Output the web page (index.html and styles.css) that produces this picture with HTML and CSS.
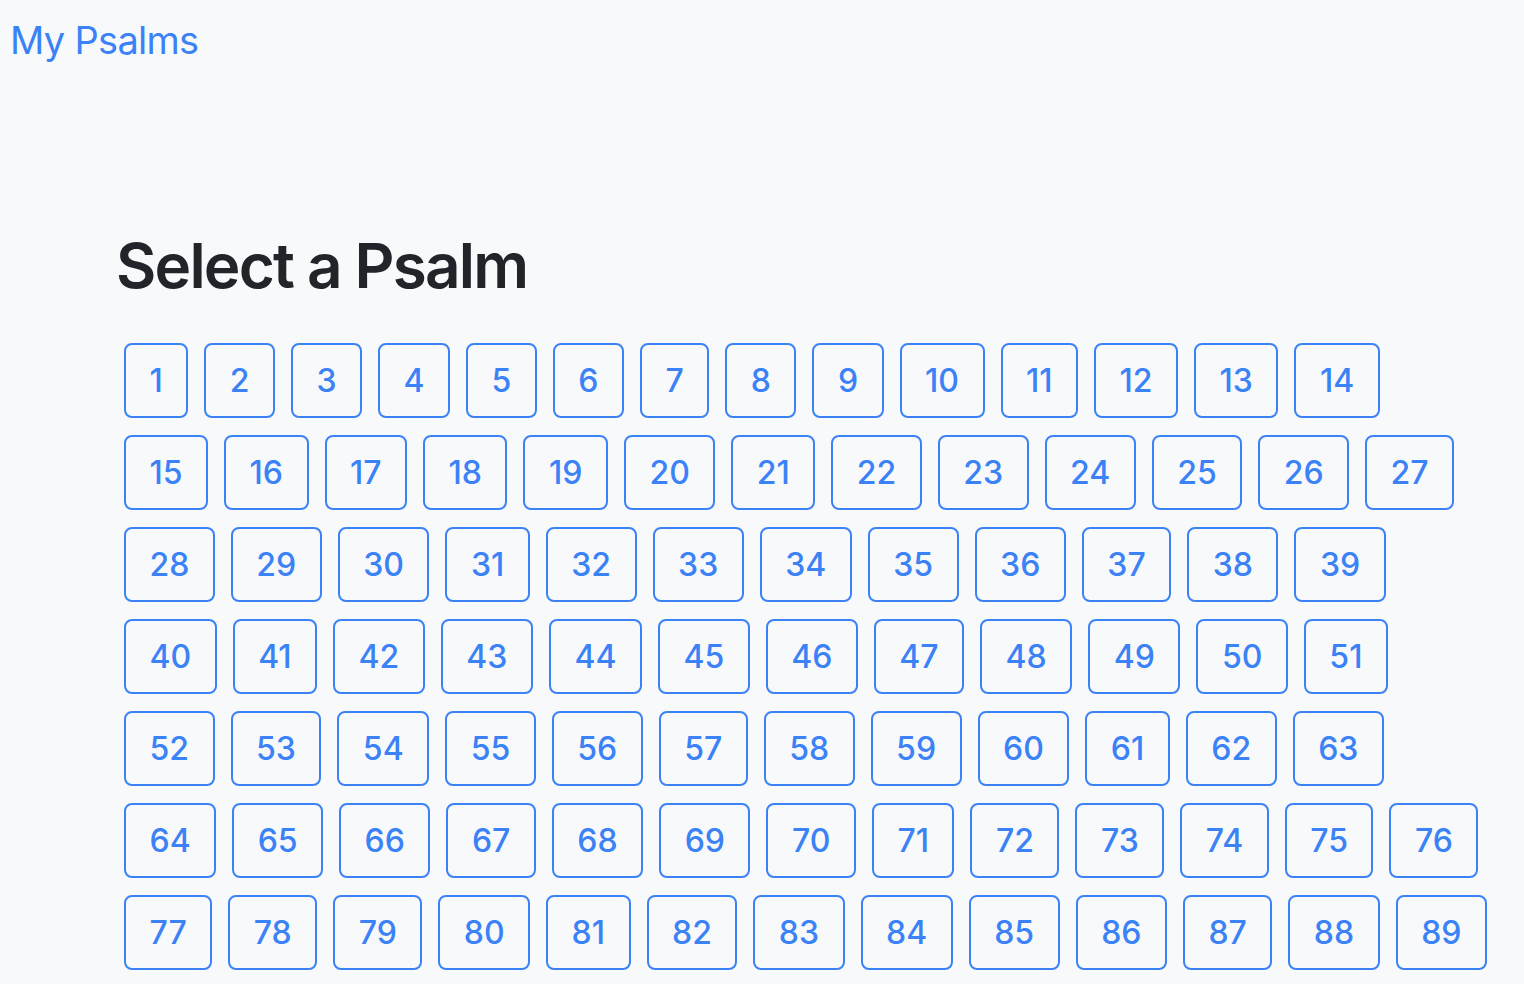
FILE: index.html
```html
<!DOCTYPE html>
<html lang="en">
<head>
<meta charset="utf-8">
<title>My Psalms</title>
<link rel="stylesheet" href="styles.css">
</head>
<body>
<nav class="navbar"><a class="brand" href="#">My Psalms</a></nav>
<main class="container">
<h1 class="title">Select a Psalm</h1>
<div class="grid">
<div class="row"><a class="btn">1</a><a class="btn">2</a><a class="btn">3</a><a class="btn">4</a><a class="btn">5</a><a class="btn">6</a><a class="btn">7</a><a class="btn">8</a><a class="btn">9</a><a class="btn">10</a><a class="btn">11</a><a class="btn">12</a><a class="btn">13</a><a class="btn">14</a></div>
<div class="row"><a class="btn">15</a><a class="btn">16</a><a class="btn">17</a><a class="btn">18</a><a class="btn">19</a><a class="btn">20</a><a class="btn">21</a><a class="btn">22</a><a class="btn">23</a><a class="btn">24</a><a class="btn">25</a><a class="btn">26</a><a class="btn">27</a></div>
<div class="row"><a class="btn">28</a><a class="btn">29</a><a class="btn">30</a><a class="btn">31</a><a class="btn">32</a><a class="btn">33</a><a class="btn">34</a><a class="btn">35</a><a class="btn">36</a><a class="btn">37</a><a class="btn">38</a><a class="btn">39</a></div>
<div class="row"><a class="btn">40</a><a class="btn">41</a><a class="btn">42</a><a class="btn">43</a><a class="btn">44</a><a class="btn">45</a><a class="btn">46</a><a class="btn">47</a><a class="btn">48</a><a class="btn">49</a><a class="btn">50</a><a class="btn">51</a></div>
<div class="row"><a class="btn">52</a><a class="btn">53</a><a class="btn">54</a><a class="btn">55</a><a class="btn">56</a><a class="btn">57</a><a class="btn">58</a><a class="btn">59</a><a class="btn">60</a><a class="btn">61</a><a class="btn">62</a><a class="btn">63</a></div>
<div class="row"><a class="btn">64</a><a class="btn">65</a><a class="btn">66</a><a class="btn">67</a><a class="btn">68</a><a class="btn">69</a><a class="btn">70</a><a class="btn">71</a><a class="btn">72</a><a class="btn">73</a><a class="btn">74</a><a class="btn">75</a><a class="btn">76</a></div>
<div class="row"><a class="btn">77</a><a class="btn">78</a><a class="btn">79</a><a class="btn">80</a><a class="btn">81</a><a class="btn">82</a><a class="btn">83</a><a class="btn">84</a><a class="btn">85</a><a class="btn">86</a><a class="btn">87</a><a class="btn">88</a><a class="btn">89</a></div>
<div class="row"><a class="btn">90</a><a class="btn">91</a><a class="btn">92</a><a class="btn">93</a><a class="btn">94</a><a class="btn">95</a><a class="btn">96</a><a class="btn">97</a><a class="btn">98</a><a class="btn">99</a><a class="btn">100</a></div>
</div>
</main>
</body>
</html>
```
FILE: styles.css
```css
* { box-sizing: border-box; }
html, body { margin: 0; padding: 0; }
body {
  background: #f8f9fb;
  font-family: Inter, "Open Sans", "Liberation Sans", sans-serif;
  color: #212529;
}
.navbar {
  padding: 12px 10px;
  height: 80px;
}
.brand {
  color: #3b82f6;
  text-decoration: none;
  font-size: 38px;
  line-height: 56px;
  letter-spacing: -0.7px;
}
.container {
  padding: 148px 0 0 116px;
}
.title {
  margin: 0 0 39px 0;
  font-size: 62px;
  font-weight: 600;
  line-height: 76px;
  letter-spacing: -1.8px;
}
.grid {
  display: flex;
  flex-direction: column;
  gap: 17px;
  padding-left: 8px;
}
.row {
  display: flex;
  gap: 16px;
}
.btn {
  display: inline-flex;
  align-items: center;
  justify-content: center;
  height: 75px;
  padding: 0 23.5px;
  border: 2px solid #3b82f6;
  border-radius: 8px;
  color: #3b82f6;
  font-size: 32px;
  font-weight: 500;
  line-height: 1;
  cursor: pointer;
}
```
